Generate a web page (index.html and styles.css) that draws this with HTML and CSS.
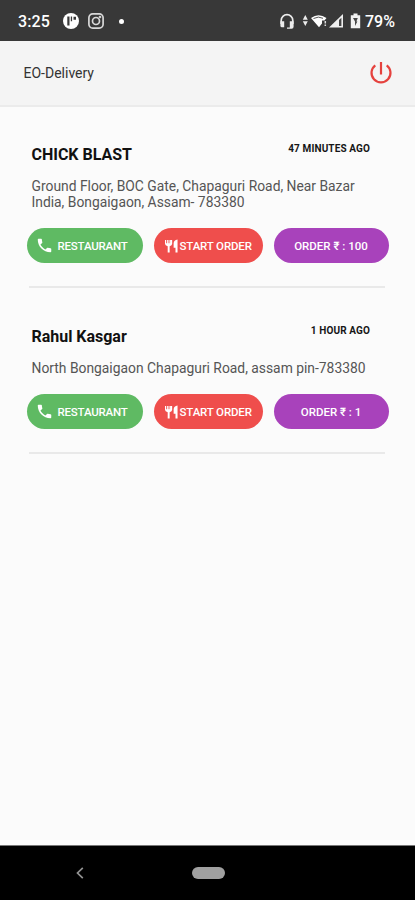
FILE: index.html
```html
<!DOCTYPE html>
<html lang="en">
<head>
<meta charset="utf-8">
<title>EO-Delivery</title>
<link rel="stylesheet" href="styles.css">
</head>
<body>
<svg class="defs" aria-hidden="true">
  <symbol id="phone" viewBox="2 2 20 20"><path d="M6.6 10.8c1.4 2.8 3.8 5.1 6.6 6.6l2.2-2.2c.3-.3.7-.4 1-.2 1.100.4 2.300.6 3.600.6.6 0 1 .4 1 1V20c0 .6-.4 1-1 1C10.600 21 3 13.400 3 4c0-.6.4-1 1-1h3.500c.6 0 1 .4 1 1 0 1.200.2 2.400.6 3.600.1.400 0 .7-.2 1z"/></symbol>
  <symbol id="cutlery" viewBox="0 0 14 14"><path d="M0 0.500h1.300V4h1V.5h1.500V4h1V.5h1.500V4h.1V.5h1.300V4.500Q7.700 6.500 5 7.200V14H2.900V7.200Q0 6.500 0 4.500zM13.500 0V14H11.300V9H9.300V4Q9.500.5 13.500 0z"/></symbol>
</svg>
<div class="screen">
  <header class="status">
    <span class="clock">3:25</span>
    <svg class="app" viewBox="0 0 16 16"><circle cx="8" cy="8" r="8" fill="#fff"/><path d="M4.300 3.500h2.200v9H4.300zM7.800 3.500h1.300v4.800H7.800zM10.500 3.800h2.500v3h-2.500z" fill="#383838"/></svg>
    <svg class="insta" viewBox="0 0 16 16" fill="none" stroke="#d8d8d8" stroke-width="1.700"><rect x=".9" y=".9" width="14.200" height="14.200" rx="3.800"/><circle cx="8" cy="8" r="3.500"/><circle cx="12" cy="4" r=".5"/></svg>
    <i class="dot"></i>
    <svg class="indicators" viewBox="0 0 84 18">
      <path d="M2.200 12V8.500a5.800 5.800 0 0 1 11.600 0V12" fill="none" stroke="#ececec" stroke-width="1.700"/>
      <path d="M1.400 9.300h3.800v6H3q-1.600 0-1.600-1.600zM10.800 9.300h3.800v5.500q0 2-2 2H8v-1.400h2.800z" fill="#ececec"/>
      <path d="M26.300 3l2.500 4.700h-5zM26.300 14l2.500-4.700h-5z" fill="#ececec"/>
      <path d="M32 6Q39.500 .5 47.500 6l-2 2.600h-2.500v2.800l-3 3.900z" fill="#fff"/>
      <path d="M34.500 6.500Q39.500 3.800 44 6.300" fill="none" stroke="#555"/>
      <path d="M46.300 9v2.500M46.300 12.500v1.500" stroke="#ddd" stroke-width="1.500"/>
      <path d="M50 15.500L64 2v13.500z" fill="#eee"/><path d="M60 8l2.400-2.300V14H60z" fill="#444"/>
      <path d="M74.500 1.500h4v1.700h2.700v13H71.800v-13h2.700z" fill="#f2f2f2"/>
      <path d="M74 6h4.800l-1.400 3.500h1L76 14V9.500z" fill="#484848"/>
    </svg>
    <span class="battery">79%</span>
  </header>
  <div class="bar">
    <h1>EO-Delivery</h1>
    <svg class="power" viewBox="0 0 22 22" fill="none" stroke="#e5423e" stroke-width="2.200"><path d="M11 0v12.500M5.300 3.300a9.500 9.500 0 1 0 11.400 0"/></svg>
  </div>
  <main>
    <article class="order first">
      <div class="head"><h2>CHICK BLAST</h2><time>47 MINUTES AGO</time></div>
      <p>Ground Floor, BOC Gate, Chapaguri Road, Near Bazar<br>India, Bongaigaon, Assam- 783380</p>
      <div class="actions">
        <button class="green"><svg class="phone"><use href="#phone"/></svg><span>RESTAURANT</span></button>
        <button class="red"><svg class="cutlery"><use href="#cutlery"/></svg><span>START ORDER</span></button>
        <button class="purple"><span>ORDER ₹ : 100</span></button>
      </div>
    </article>
    <article class="order second">
      <div class="head"><h2>Rahul Kasgar</h2><time>1 HOUR AGO</time></div>
      <p>North Bongaigaon Chapaguri Road, assam pin-783380</p>
      <div class="actions">
        <button class="green"><svg class="phone"><use href="#phone"/></svg><span>RESTAURANT</span></button>
        <button class="red"><svg class="cutlery"><use href="#cutlery"/></svg><span>START ORDER</span></button>
        <button class="purple"><span>ORDER ₹ : 1</span></button>
      </div>
    </article>
  </main>
  <nav>
    <svg class="back" viewBox="0 0 8 12" fill="none" stroke="#929292" stroke-width="1.700"><path d="M6.800 .8L1.500 6l5.300 5.200"/></svg>
    <i class="home"></i>
  </nav>
</div>
</body>
</html>
```
FILE: styles.css
```css
* { box-sizing: border-box; }
body { margin: 0; font-family: Roboto, "Noto Sans", sans-serif; background: #fbfbfb; }
.defs { display: none; }
svg { display: block; flex: none; }
h1, h2, p { margin: 0; white-space: nowrap; }
.screen { width: 415px; height: 900px; display: flex; flex-direction: column; overflow: hidden; }
.status { height: 41px; flex: none; background: #383838; color: #fff; display: flex; align-items: center; padding: 1px 0 0 18px; }
.clock { width: 45px; font-size: 16px; font-weight: 500; letter-spacing: .1px; }
.app { width: 16px; height: 16px; }
.insta { width: 16px; height: 16px; margin-left: 9px; }
.dot { width: 5px; height: 5px; border-radius: 50%; background: #fff; margin-left: 15px; }
.indicators { width: 84px; height: 18px; margin-left: 154.500px; }
.battery { font-size: 16px; font-weight: 500; margin-left: 2.500px; letter-spacing: 0; }
.bar { height: 66px; flex: none; background: #f4f4f4; border-bottom: 2px solid #ebebeb; display: flex; align-items: center; justify-content: space-between; padding: 0 23px 0 23.500px; }
h1 { font-size: 14px; font-weight: 400; color: #333; }
.power { width: 22px; height: 22px; margin-top: -1px; }
main { flex: 1; padding: 0 26px 0 27px; }
.order { padding-top: 36px; }
.first { height: 180px; }
.second { height: 166px; padding-top: 38px; }
.head { display: flex; justify-content: space-between; padding: 0 19px 0 4.500px; height: 24px; }
h2 { font-size: 16px; line-height: 24px; font-weight: 700; color: #111; letter-spacing: -.02px; }
time { font-size: 10px; line-height: 12px; font-weight: 700; color: #161616; white-space: nowrap; letter-spacing: .12px; }
p { padding-left: 4.500px; margin-top: 11px; font-size: 13.850px; line-height: 16px; color: #555; }
.actions { display: grid; grid-template-columns: 115.500px 109px 115px; column-gap: 11px; margin-top: 18px; }
.actions::after { content: ""; height: 2px; background: #e9e9e9; grid-column: 1 / -1; margin: 22.500px 4px 0 2px; }
button { height: 35px; border: 0; border-radius: 18px; padding: 0; color: #fff; font: 500 11.500px Roboto, "Noto Sans", sans-serif; display: flex; align-items: center; white-space: nowrap; letter-spacing: -.15px; }
.green { background: #5fba63; padding-left: 10px; letter-spacing: -.2px; }
.red { background: #ef4e4c; padding-left: 11px; }
.purple { background: #a842bb; justify-content: center; letter-spacing: 0; }
.phone { width: 15px; height: 15px; fill: #fff; margin-right: 5.500px; }
.cutlery { width: 13px; height: 14px; fill: #fff; margin-right: 2px; }
nav { height: 55px; flex: none; background: #000; border-top: 1px solid #777; display: flex; align-items: center; padding-left: 76px; }
.back { width: 8px; height: 12px; }
.home { width: 33px; height: 12px; border-radius: 6px; background: #a0a0a0; margin-left: 107.500px; }
```
